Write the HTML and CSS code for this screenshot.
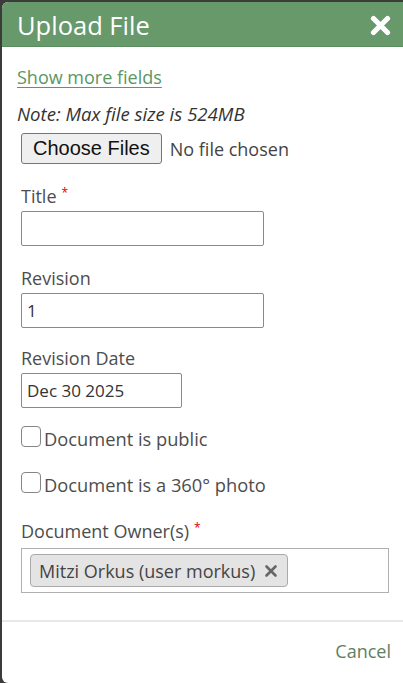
FILE: index.html
```html
<!DOCTYPE html>
<html lang="en">
<head>
<meta charset="utf-8">
<title>Upload File</title>
<link rel="stylesheet" href="styles.css">
</head>
<body>
<div class="dialog">
  <div class="dialog-header">
    <h1 class="dialog-title">Upload File</h1>
    <button class="close-btn" type="button" aria-label="Close">
      <svg width="21" height="21" viewBox="0 0 21 21"><path d="M3.5 3.5 L17.5 17.5 M17.5 3.5 L3.5 17.5" stroke="#fff" stroke-width="5.2" stroke-linecap="round" fill="none"/></svg>
    </button>
  </div>
  <div class="dialog-body">
    <a class="more-link" href="#">Show more fields</a>
    <p class="note">Note: Max file size is 524MB</p>
    <div class="file-row">
      <span class="file-btn">Choose Files</span>
      <span class="file-status">No file chosen</span>
    </div>
    <div class="field">
      <label class="field-label">Title<span class="req">*</span></label>
      <input class="text-input wide" type="text" value="">
    </div>
    <div class="field">
      <label class="field-label">Revision</label>
      <input class="text-input wide" type="text" value="1">
    </div>
    <div class="field field-tight">
      <label class="field-label">Revision Date</label>
      <input class="text-input short" type="text" value="Dec 30 2025">
    </div>
    <label class="check-row first">
      <input class="check" type="checkbox">
      <span class="check-text">Document is public</span>
    </label>
    <label class="check-row">
      <input class="check" type="checkbox">
      <span class="check-text">Document is a 360° photo</span>
    </label>
    <div class="field owners">
      <label class="field-label">Document Owner(s)<span class="req">*</span></label>
      <div class="tag-box">
        <span class="tag">Mitzi Orkus (user morkus)
          <svg class="tag-x" width="14" height="14" viewBox="0 0 14 14"><path d="M2.5 2.5 L11.5 11.5 M11.5 2.5 L2.5 11.5" stroke="#666" stroke-width="2.6" stroke-linecap="round" fill="none"/></svg>
        </span>
      </div>
    </div>
  </div>
  <div class="dialog-footer">
    <a class="cancel" href="#">Cancel</a>
  </div>
</div>
</body>
</html>
```
FILE: styles.css
```css
* { box-sizing: border-box; }
html, body { margin: 0; height: 100%; }
body {
  background: #3b3b3b;
  padding: 2px 0 0 2px;
  overflow: hidden;
  font-family: "Open Sans", "Liberation Sans", sans-serif;
  font-size: 18px;
  color: #4a4a4a;
}
.dialog {
  height: 681px;
  background: #fff;
  border-radius: 6px 0 0 6px;
  display: flex;
  flex-direction: column;
  overflow: hidden;
}
.dialog-header {
  height: 45px;
  flex: none;
  background: #67996b;
  border-bottom: 1px solid #5b8c5f;
  display: flex;
  align-items: center;
  justify-content: space-between;
  padding: 0 12px 0 15px;
}
.dialog-title {
  margin: 0;
  font-size: 25.5px;
  font-weight: 400;
  line-height: 34px;
  color: #fff;
  padding-top: 1px;
}
.close-btn {
  border: 0;
  background: none;
  padding: 0;
  width: 21px;
  height: 21px;
  display: flex;
  margin-top: 2px;
}
.dialog-body {
  flex: 1;
  padding: 18px 15px 0 15px;
}
.more-link {
  display: inline-block;
  line-height: 24px;
  color: #5a9762;
  text-decoration: underline;
  text-underline-offset: 3px;
  text-decoration-thickness: 1px;
}
.note {
  margin: 13px 0 0 0;
  line-height: 24px;
  font-style: italic;
  font-size: 18.6px;
  color: #333;
}
.file-row {
  margin: 7px 0 0 4px;
  display: flex;
  align-items: center;
  gap: 8px;
}
.file-btn {
  height: 31px;
  padding: 0 11px;
  display: flex;
  align-items: center;
  background: #efefef;
  border: 1px solid #767676;
  border-radius: 3px;
  font-family: "Liberation Sans", Arial, sans-serif;
  font-size: 20px;
  color: #111;
}
.file-status {
  color: #444;
  line-height: 24px;
}
.field {
  margin: 20px 0 0 4px;
}
.field-tight { margin-top: 18px; }
.field-label {
  display: block;
  line-height: 24px;
  color: #4d4d4d;
}
.req {
  color: #e00000;
  font-size: 12px;
  vertical-align: top;
  line-height: 14px;
  margin-left: 5px;
  position: relative;
  top: 2px;
}
.text-input {
  display: block;
  margin-top: 3px;
  height: 35px;
  padding: 0 5px;
  border: 1px solid #8a8a8a;
  border-radius: 2px;
  font-family: "Open Sans", "Liberation Sans", sans-serif;
  font-size: 17px;
  color: #333;
  background: #fff;
  outline: none;
}
.text-input.wide { width: 243px; }
.text-input.short { width: 161px; }
.check-row {
  display: flex;
  align-items: flex-start;
  gap: 3px;
  margin: 21px 0 0 4px;
  line-height: 24px;
  color: #4d4d4d;
}
.check-row.first { margin-top: 18px; }
.check {
  appearance: none;
  -webkit-appearance: none;
  margin: 0;
  width: 20px;
  height: 21px;
  border: 1.5px solid #858585;
  border-radius: 4px;
  background: #fff;
  flex: none;
}
.check-text { padding-top: 1px; font-size: 18.3px; }
.owners { margin-top: 22px; }
.tag-box {
  margin-top: 5px;
  width: 368px;
  height: 45px;
  border: 1px solid #b0b0b0;
  padding: 5px 8px;
  display: flex;
  align-items: flex-start;
}
.tag {
  height: 33px;
  display: inline-flex;
  align-items: center;
  gap: 9px;
  padding: 0 9px 0 8px;
  background: #e4e4e4;
  border: 1px solid #aaa;
  border-radius: 4px;
  color: #444;
  font-size: 18px;
  white-space: nowrap;
}
.tag-x { flex: none; }
.dialog-footer {
  flex: none;
  height: 63px;
  border-top: 2px solid #e8e8e8;
  padding: 17px 12px 0 0;
  text-align: right;
}
.cancel {
  line-height: 24px;
  color: #5e8062;
  text-decoration: none;
}
```
